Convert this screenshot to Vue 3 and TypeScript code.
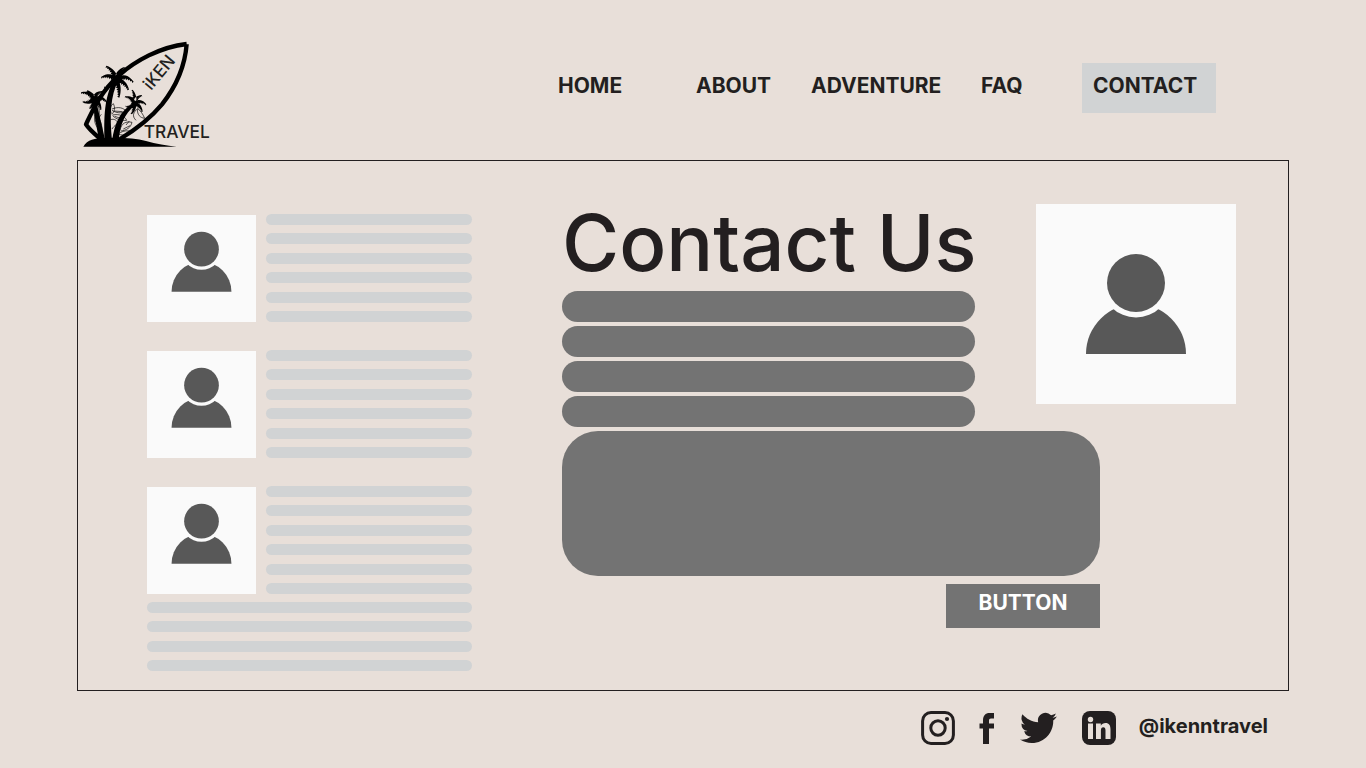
<script setup lang="ts">
import { ref } from 'vue'

type Frond = [number, number, number]

const links = ['HOME', 'ABOUT', 'ADVENTURE', 'FAQ', 'CONTACT']
const fields = ['Name', 'Email', 'Phone', 'Subject']
const values = ref<string[]>(fields.map(() => ''))
const message = ref('')

// Palm leaf: a smooth arched back with a serrated underside.
function leaf(cx: number, cy: number, [dx, dy, bow]: Frond, depth: number): string {
  const len = Math.hypot(dx, dy)
  const nx = -dy / len
  const ny = dx / len
  const at = (t: number, off: number) => {
    const lift = 4 * t * (1 - t) * bow + off
    return `${(cx + dx * t + nx * lift).toFixed(1)} ${(cy + dy * t + ny * lift).toFixed(1)}`
  }
  const side = bow > 0 ? -1 : 1
  const pts: string[] = []
  for (let i = 0; i <= 8; i++) pts.push(at(i / 8, -side * 5 * (1 - i / 8)))
  for (let i = 7; i > 0; i--) {
    pts.push(at(i / 8 + 0.06, side * depth * (1.1 - i / 12)))
    pts.push(at(i / 8, side * depth * 0.6 * (1.1 - i / 10)))
  }
  return `M${pts.join('L')}Z`
}

function palm(cx: number, cy: number, depth: number, fronds: Frond[]): string {
  return fronds.map((f) => leaf(cx, cy, f, depth)).join('')
}

const crowns = [
  palm(139, 132, 14, [[-46, -6, 9], [-30, -40, 7], [24, -36, -7], [52, 8, -12], [38, 32, -8], [9, 56, -6], [-36, 28, -9]]),
  palm(72, 190, 12, [[-39, -18, 8], [-20, -24, 4], [24, -22, -6], [40, 12, -9], [22, 34, -6], [-34, 12, -8], [-12, 32, -5]]),
  palm(193, 204, 11, [[-28, -20, 7], [-5, -40, 5], [22, -24, -6], [36, 4, -8], [25, 26, -6], [-26, 12, -7], [-8, 34, -5]]),
]
</script>

<template>
  <div class="page">
    <header class="top">
      <a class="logo" href="#" aria-label="iKEN Travel">
        <svg viewBox="0 0 450 360" width="150" height="120">
          <path class="board" d="M350 27C270 36 195 78 147 121C90 172 66 230 48 268C58 284 74 297 94 314M350 27C346 80 325 146 276 208C236 256 193 286 150 312" />
          <g class="sketch">
            <path d="M78 262c-8-22-6-42 4-58c8 20 8 40-2 60M92 290c-18-20-22-34-14-48c12 8 18 24 18 44M124 236c-6-16-2-24 6-30c6 12 4 22-4 32M126 222c20-8 34-4 44 8c-16 6-32 4-44-4M128 240c18-4 36 2 42 16c-18 2-32-4-42-14M122 254c10-4 20 2 24 14M94 238c-10 12-12 22-6 36M150 286c4-22 18-28 36-24c-4 16-16 24-34 26M146 296c14-10 28-10 42-6c-14 10-28 12-42 8M202 222c0 18 8 26 22 28c-6-14-12-22-20-28M206 218c-18 14-20 26-8 38M168 270l10-12M160 282l20-10M126 282c8-12 16-16 24-18M82 246l4 34M132 228l26 2M134 244l24 8" />
          </g>
          <path d="M133 132C108 176 100 226 104 318H126C119 240 121 184 145 136Z" />
          <path d="M67 192C73 240 80 278 88 318H106C95 268 85 228 77 190Z" />
          <path d="M188 206C152 226 134 262 126 318H146C150 270 162 238 196 210Z" />
          <path v-for="crown in crowns" :key="crown" :d="crown" />
          <circle cx="139" cy="133" r="12" />
          <circle cx="72" cy="192" r="9" />
          <circle cx="193" cy="206" r="8" />
          <path d="M40 335C52 313 76 310 102 309C150 307 196 309 228 318C258 327 290 332 320 335Z" />
          <text x="243" y="168" transform="rotate(-50 243 168)">iKEN</text>
          <text class="wide" x="221" y="310">TRAVEL</text>
        </svg>
      </a>
      <nav class="nav" aria-label="Main">
        <a v-for="link in links" :key="link" href="#" :class="{ active: link === 'CONTACT' }">{{ link }}</a>
      </nav>
    </header>

    <main class="frame">
      <aside class="people">
        <article v-for="n in 3" :key="n" class="person">
          <svg class="thumb" viewBox="9 22 182 178" aria-hidden="true">
            <path d="M50 150a50 50 0 0 1 100 0z" />
            <circle class="gap" cx="100" cy="79" r="34.5" />
            <circle cx="100" cy="79" r="29" />
          </svg>
          <div class="lines"><span v-for="i in 6" :key="i"></span></div>
        </article>
        <div class="lines tail"><span v-for="i in 4" :key="i"></span></div>
      </aside>

      <form class="contact" @submit.prevent>
        <div class="entry">
          <h1>Contact Us</h1>
          <div class="fields">
            <input v-for="(field, i) in fields" :key="field" v-model="values[i]" type="text" :aria-label="field" />
          </div>
        </div>
        <svg class="photo" viewBox="0 0 200 200" aria-hidden="true">
          <path d="M50 150a50 50 0 0 1 100 0z" />
          <circle class="gap" cx="100" cy="79" r="34.5" />
          <circle cx="100" cy="79" r="29" />
        </svg>
        <div class="message">
          <textarea v-model="message" aria-label="Message"></textarea>
          <button type="submit">BUTTON</button>
        </div>
      </form>
    </main>

    <footer class="social">
      <a href="#" aria-label="Instagram">
        <svg width="34" height="34" viewBox="0 0 34 34">
          <rect class="ring" x="1.6" y="1.6" width="30.8" height="30.8" rx="8.4" />
          <circle class="ring" cx="17" cy="17" r="7.2" />
          <circle cx="26" cy="8" r="2.1" />
        </svg>
      </a>
      <a class="fb" href="#" aria-label="Facebook">
        <svg width="16" height="34" viewBox="0 0 16 34">
          <path d="M4 33V17.500H.500V12.500H4V9.500C4 4.500 6.500 2 10.500 2H15v5.500h-3C10.600 7.500 10 8.200 10 9.500v3h5v5h-5V33z" />
        </svg>
      </a>
      <a class="tw" href="#" aria-label="Twitter">
        <svg width="37" height="34" viewBox="0 1 24 22">
          <path d="M23.950 4.570a10 10 0 0 1-2.820.770 4.960 4.960 0 0 0 2.160-2.720c-.950.550-2 .950-3.130 1.180a4.920 4.920 0 0 0-8.380 4.480C7.690 8.090 4.070 6.130 1.640 3.160a4.900 4.900 0 0 0 1.520 6.570 4.900 4.900 0 0 1-2.230-.610v.060a4.930 4.930 0 0 0 3.950 4.830 5 5 0 0 1-2.210.080 4.940 4.940 0 0 0 4.600 3.420A9.870 9.870 0 0 1 0 19.540a13.990 13.990 0 0 0 7.550 2.210c9.050 0 14-7.500 14-13.980 0-.210 0-.420-.020-.630a9.940 9.940 0 0 0 2.420-2.570z" />
        </svg>
      </a>
      <a class="li" href="#" aria-label="LinkedIn">
        <svg width="34" height="34" viewBox="0 0 34 34">
          <rect width="34" height="34" rx="8" />
          <path class="cut" d="M6 12.500h5V28H6zM14 12.500h4.800v2.200c1-1.700 2.700-2.600 4.700-2.600 3.600 0 5 2.400 5 6.400V28h-5v-8.400c0-2.200-.700-3.300-2.200-3.300-1.600 0-2.400 1.200-2.400 3.300V28H14z" />
          <circle class="cut" cx="8.500" cy="8.500" r="2.700" />
        </svg>
      </a>
      <a class="handle" href="#">@ikenntravel</a>
    </footer>
  </div>
</template>

<style>
body {
  margin: 0;
  background: #e8dfd9;
}
</style>

<style scoped>
.page {
  min-height: 100vh;
  box-sizing: border-box;
  background: #e8dfd9;
  color: #231f20;
  font-family: Inter, "Liberation Sans", sans-serif;
}

a {
  color: inherit;
  text-decoration: none;
}

svg {
  display: block;
}

.top {
  display: flex;
  justify-content: space-between;
  align-items: flex-start;
  padding: 35px 150px 5px 70px;
}

.logo .board {
  fill: none;
  stroke: #000;
  stroke-width: 13;
  stroke-linejoin: round;
}

.logo .sketch {
  fill: none;
  stroke: #000;
  stroke-width: 2;
}

.logo text {
  fill: #231f20;
  font-size: 51px;
  font-weight: 500;
}

.logo .wide {
  font-size: 52px;
}

.nav {
  display: grid;
  grid-template-columns: 138fr 115fr 170fr 101fr 134fr;
  flex: 0 1 658px;
  margin-top: 28px;
  font-size: 21px;
  font-weight: 700;
  line-height: 46px;
}

.nav a {
  height: 50px;
}

.nav .active {
  padding-left: 11px;
  background: #d1d3d4;
}

.frame {
  display: grid;
  grid-template-columns: minmax(0, 325fr) minmax(0, 674fr);
  column-gap: 90px;
  margin: 0 77px;
  padding: 43px 52px 19px 69px;
  border: 1px solid #231f20;
}

.people {
  display: flex;
  flex-direction: column;
  gap: 28px;
  padding-top: 10px;
}

.person {
  display: grid;
  grid-template-columns: 109px 1fr;
  gap: 10px;
  align-items: end;
}

.thumb,
.photo {
  width: 100%;
  background: #fafafa;
  fill: #585858;
}

.gap {
  fill: #fafafa;
}

.lines {
  display: flex;
  flex-direction: column;
  justify-content: space-between;
  align-self: stretch;
  min-height: 108px;
}

.lines span {
  height: 11px;
  border-radius: 6px;
  background: #d1d3d4;
}

.tail {
  min-height: 69px;
  margin-top: -20px;
}

.contact {
  display: grid;
  grid-template-columns: minmax(0, 1fr) 200px;
  column-gap: 61px;
  row-gap: 4px;
  align-content: start;
  align-items: start;
}

h1 {
  margin: 0 0 9px;
  font-size: 78px;
  font-weight: 500;
  line-height: 78px;
  white-space: nowrap;
}

.fields {
  display: grid;
  gap: 4px;
}

input,
textarea,
button {
  box-sizing: border-box;
  margin: 0;
  border: 0;
  background: #737373;
  color: #fff;
  font-family: inherit;
}

input {
  width: 100%;
  height: 31px;
  padding: 0 16px;
  border-radius: 16px;
  font-size: 16px;
}

.message {
  display: flex;
  flex-direction: column;
  align-items: flex-end;
  gap: 8px;
  grid-column: 1 / -1;
  width: 80%;
  max-width: 538px;
}

textarea {
  width: 100%;
  height: 145px;
  padding: 20px 28px;
  border-radius: 36px;
  font-size: 16px;
  resize: none;
}

button {
  width: 154px;
  height: 44px;
  padding: 0 0 7px;
  font-size: 21px;
  font-weight: 700;
}

.social {
  display: flex;
  justify-content: flex-end;
  align-items: flex-start;
  padding: 20px 98px 20px 77px;
}

.social svg {
  fill: #231f20;
}

.social .ring {
  fill: none;
  stroke: #231f20;
  stroke-width: 3;
}

.social .cut {
  fill: #e8dfd9;
}

.fb {
  margin-left: 24px;
}

.tw,
.li {
  margin-left: 25px;
}

.handle {
  margin-left: 23px;
  font-size: 20px;
  font-weight: 700;
  line-height: 30px;
}
</style>
